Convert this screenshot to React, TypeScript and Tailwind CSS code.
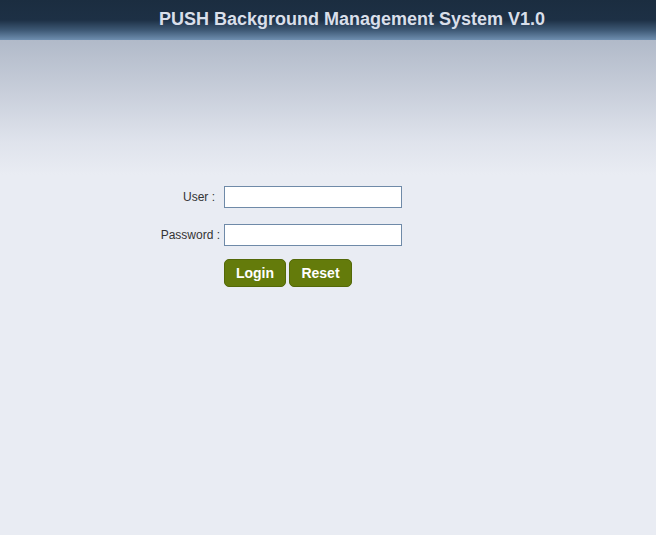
import React from "react";

export default function App() {
  return (
    <div className="min-h-[535px] w-full bg-[#e9ecf3] font-['Liberation_Sans',Arial,sans-serif]">
      <div className="h-[40px] w-full bg-[linear-gradient(to_bottom,#1b2d40_0%,#1d3045_50%,#3d5874_75%,#6f8fb0_100%)] flex items-center">
        <h1 className="ml-[159px] mt-[-3px] text-[18px] font-bold text-[#d9dfea] leading-none">
          PUSH Background Management System V1.0
        </h1>
      </div>
      <div className="h-[135px] w-full bg-[linear-gradient(to_bottom,#b1bac9_0%,#c9cfdb_40%,#dfe3ec_75%,#e9ecf3_100%)]" />
      <div className="flex flex-col pt-[11px]">
        <div className="flex items-center h-[22px]">
          <label className="w-[224px] pr-[9px] text-right text-[12px] text-[#333] whitespace-pre">User :</label>
          <input className="w-[178px] h-[22px] bg-white border border-[#6f8aa8] outline-none" />
        </div>
        <div className="flex items-center h-[22px] mt-[16px]">
          <label className="w-[224px] pr-[4px] text-right text-[12px] text-[#333] whitespace-pre">Password :</label>
          <input type="password" className="w-[178px] h-[22px] bg-white border border-[#6f8aa8] outline-none" />
        </div>
        <div className="flex ml-[224px] mt-[13px] gap-[3px]">
          <button className="w-[62px] h-[28px] rounded-[5px] bg-[#647b0b] border border-[#536808] text-white font-bold text-[14px]">
            Login
          </button>
          <button className="w-[63px] h-[28px] rounded-[5px] bg-[#647b0b] border border-[#536808] text-white font-bold text-[14px]">
            Reset
          </button>
        </div>
      </div>
    </div>
  );
}
